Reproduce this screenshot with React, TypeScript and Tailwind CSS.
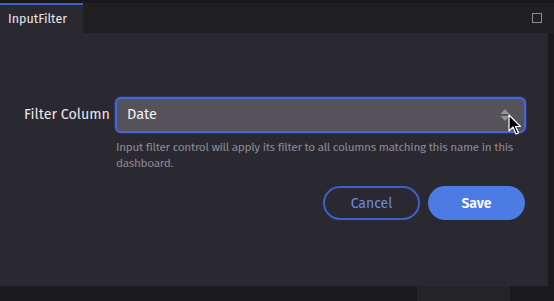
import { useState } from "react"

function SortArrows() {
    return (
        <svg width="10" height="14" viewBox="0 0 10 14" className="mr-[4px] shrink-0">
            <path d="M5 1 L9.5 6 H0.5 Z" fill="#949197" />
            <path d="M5 13 L9.5 8 H0.5 Z" fill="#949197" />
        </svg>
    )
}

function Cursor() {
    return (
        <svg width="14" height="22" viewBox="0 0 14 22" className="absolute left-[508px] top-[114px]">
            <path
                d="M1 1 L1 17 L5 13 L8 20 L10.5 19 L7.5 12.5 L12.5 12.5 Z"
                fill="#000"
                stroke="#fff"
                strokeWidth="1.2"
                strokeLinejoin="round"
            />
        </svg>
    )
}

export default function App() {
    const [column, setColumn] = useState("Date")

    return (
        <div className="relative flex h-[301px] w-[554px] flex-col overflow-hidden bg-[#1b1a1e] font-['Fira_Sans','Open_Sans',sans-serif]">
            <div className="h-[3px] shrink-0 bg-[#19181c]" />
            <div className="flex h-[30px] shrink-0 bg-[#201f24] pr-[6px]">
                <div className="flex w-[83px] items-center border-t-2 border-[#3e5fc4] bg-[#2a2830] pl-[8px] text-[12.5px] text-[#e9e8ec]">
                    InputFilter
                </div>
                <div className="flex flex-1 items-center justify-end pr-[6px]">
                    <div className="size-[10px] border border-[#8b8a8f]" />
                </div>
            </div>
            <div className="mr-[6px] flex h-[253px] shrink-0 flex-col bg-[#2a2830] pt-[64px]">
                <div className="flex items-center">
                    <label className="w-[115px] pl-[24px] text-[14.3px] text-[#e8e7ea]">Filter Column</label>
                    <div className="flex h-[36px] w-[411px] items-center rounded-[6px] border-2 border-[#4567d3] bg-[#55525a] px-[10px] shadow-[0_0_0_1px_#2e3760]">
                        <input
                            value={column}
                            onChange={(e) => setColumn(e.target.value)}
                            className="flex-1 bg-transparent text-[14.5px] text-[#f1f0f3] outline-none"
                        />
                        <SortArrows />
                    </div>
                </div>
                <p className="ml-[116px] mt-[6px] max-w-[410px] text-[11.8px] leading-[16px] tracking-[-0.3px] text-[#8f8c93]">
                    Input filter control will apply its filter to all columns matching this name in this dashboard.
                </p>
                <div className="mr-[23px] mt-[15px] flex justify-end gap-[8px]">
                    <button className="h-[34px] w-[97px] rounded-full border-2 border-[#3f60c6] text-[14px] text-[#6a8de4]">
                        Cancel
                    </button>
                    <button className="h-[34px] w-[97px] rounded-full bg-[#4b7be3] text-[14px] font-semibold text-white">
                        Save
                    </button>
                </div>
            </div>
            <div className="flex flex-1">
                <div className="w-[417px]" />
                <div className="w-[93px] bg-[#252429]" />
            </div>
            <Cursor />
        </div>
    )
}
